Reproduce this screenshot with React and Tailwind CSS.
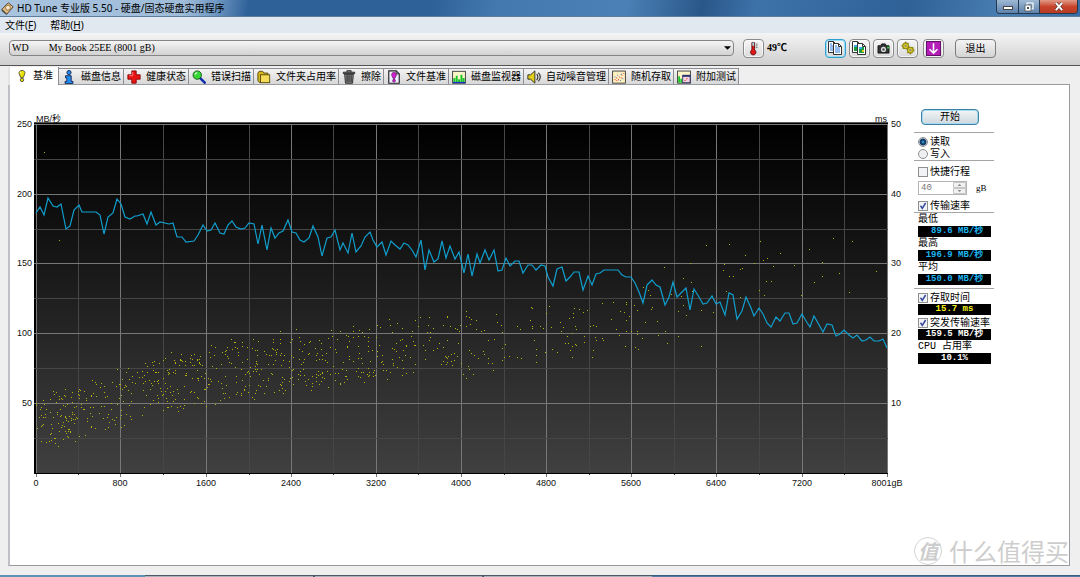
import React, { useState } from 'react';
import clsx from 'clsx';

const SPEED =
    '36,213 40,207 44,215 48,198 53,206 57,207 61,204 66,229 70,226 74,210 79,205 82,212 96,212 100,215 104,234 108,217 113,213 117,199 121,204 125,217 130,219 135,216 137,216 143,214 147,224 151,212 156,225 160,222 169,224 173,223 177,237 182,237 186,242 194,241 198,235 203,225 207,231 211,230 215,223 220,233 224,234 228,225 232,221 236,227 241,229 245,228 249,223 254,224 258,244 262,225 267,250 271,228 275,238 279,233 283,231 288,220 292,232 296,233 300,240 304,242 309,238 313,226 318,237 322,256 327,238 331,237 335,230 340,250 343,243 348,253 352,233 356,252 361,246 365,237 370,232 373,240 377,247 382,242 386,255 391,241 395,245 400,249 404,243 408,245 412,250 416,257 421,240 425,270 429,250 434,262 438,259 442,241 446,258 450,246 455,259 459,252 464,273 468,254 472,276 477,254 480,263 485,250 489,260 494,250 498,271 502,270 506,258 510,266 515,261 519,261 523,273 528,265 532,265 536,270 541,265 545,266 548,277 553,286 557,269 562,267 566,281 570,277 574,272 579,272 583,290 588,276 592,285 596,274 600,273 604,270 618,270 622,275 626,277 631,277 635,283 639,292 643,303 647,285 652,280 656,285 660,287 665,305 669,297 673,282 677,297 682,292 686,288 690,310 694,289 699,297 703,304 707,303 712,296 716,304 720,302 725,315 729,293 733,295 737,319 742,311 746,297 751,308 754,316 759,308 763,314 767,323 771,327 776,317 780,321 785,313 789,313 793,324 797,323 802,314 806,321 810,327 814,316 823,332 827,324 832,325 836,336 840,334 844,330 849,335 853,338 857,335 862,341 866,340 870,337 874,341 879,341 883,339 887,348';

const ACCESS =
    '44,152 59,240 466,311 466,316 469,317 471,319 466,326 470,324 476,320 476,329 481,331 484,330 496,314 497,322 501,325 502,332 517,326 520,329 488,340 494,339 469,350 471,353 474,355 483,351 484,354 478,358 488,358 488,363 492,363 502,360 502,348 505,344 504,357 509,356 517,357 521,358 468,366 469,369 473,374 463,374 466,378 493,370 531,307 532,308 530,320 532,326 532,328 540,326 543,328 549,306 546,313 536,349 536,355 536,362 534,340 545,352 552,349 557,352 551,327 560,322 563,327 561,331 574,308 579,309 587,310 583,312 573,313 573,317 569,318 575,326 576,329 572,333 567,336 584,336 565,343 568,343 575,344 576,345 572,346 570,350 572,357 584,342 593,325 590,326 596,326 595,337 596,340 593,350 592,357 602,303 613,302 602,338 603,340 611,319 616,329 619,335 620,311 624,312 629,316 626,320 626,331 626,302 626,304 634,305 637,310 631,331 637,331 637,334 642,338 625,346 635,347 638,349 645,322 652,307 651,309 657,321 658,335 665,331 667,343 678,311 678,336 683,305 686,315 701,310 701,346 713,312 706,245 729,244 760,241 833,238 852,241 745,255 767,258 763,260 780,253 809,249 690,263 664,267 724,264 723,270 754,263 740,269 742,268 773,266 794,265 822,262 729,276 733,276 766,281 771,281 814,282 822,276 839,273 876,271 683,278 691,282 672,284 671,294 681,296 692,291 643,287 648,290 650,295 726,291 740,297 759,290 764,295 801,295 849,292';

// dense part of the access times: [x from, x to, top at from, top at to, bottom at from, bottom at to, count]
const BANDS = [
    [36, 80, 392, 384, 454, 440, 95],
    [80, 164, 374, 350, 440, 418, 120],
    [164, 206, 350, 346, 416, 410, 82],
    [206, 300, 342, 328, 410, 396, 155],
    [300, 376, 332, 318, 396, 384, 112],
    [376, 461, 318, 308, 384, 370, 92],
];

const accessPath = () => {
    let seed = 77;
    const rnd = () => {
        seed = (seed * 16807) % 2147483647;
        return seed / 2147483647;
    };
    const dots = ACCESS.split(' ').map((p) => `M${p.replace(',', ' ')}h1`);
    BANDS.forEach(([x0, x1, t0, t1, b0, b1, count]) => {
        for (let i = 0; i < count; i++) {
            const k = rnd();
            const top = t0 + (t1 - t0) * k;
            const bottom = b0 + (b1 - b0) * k;
            const y = top + (bottom - top) * (0.15 * rnd() + 0.85 * rnd());
            dots.push(`M${Math.round(x0 + (x1 - x0) * k)} ${Math.round(y)}h1`);
        }
    });
    return dots.join('');
};

const DOTS = accessPath();
const COLS = [36, 78, 120, 163, 206, 249, 291, 333, 376, 418, 461, 504, 546, 589, 631, 674, 716, 759, 802, 844, 887];
const ROWS = [124, 159, 194, 229, 263, 298, 333, 368, 403, 438];

const Chart = () => (
    <svg viewBox="17 112 888 378" className="block w-full h-auto font-['Liberation_Sans','Noto_Sans_CJK_SC',sans-serif] text-[9px]" fill="#111">
        <defs>
            <linearGradient id="plot" x1="0" y1="0" x2="0" y2="1">
                <stop offset="0" stopColor="#000" />
                <stop offset="0.35" stopColor="#141414" />
                <stop offset="0.65" stopColor="#292929" />
                <stop offset="1" stopColor="#404040" />
            </linearGradient>
        </defs>
        <rect x="34" y="122" width="854" height="352" fill="#000" />
        <rect x="36" y="124" width="851" height="349" fill="url(#plot)" />
        <g shapeRendering="crispEdges">
            {COLS.map((x, i) => (
                <rect key={x} x={x} y="124" width="1" height={i % 2 ? 351 : 353} fill={i % 2 ? '#464646' : '#777'} />
            ))}
            {ROWS.map((y, i) => (
                <rect key={y} x="34" y={y} width="854" height="1" fill={i % 2 ? '#464646' : '#777'} />
            ))}
            <rect x="34" y="122" width="854" height="1" fill="#555" />
            <rect x="34" y="473" width="854" height="1" fill="#000" />
            <path d={DOTS} transform="translate(0 0.5)" stroke="#b4b40a" fill="none" />
        </g>
        <polyline points={SPEED} fill="none" stroke="#109fce" strokeWidth="1.2" />
        <g>
            <text x="36" y="122">MB/秒</text>
            <text x="887" y="122" textAnchor="end">ms</text>
            {[250, 200, 150, 100, 50].map((v, i) => (
                <text key={v} x="32" y={ROWS[i * 2] + 3} textAnchor="end">{v}</text>
            ))}
            {[50, 40, 30, 20, 10].map((v, i) => (
                <text key={v} x="891" y={ROWS[i * 2] + 3}>{v}</text>
            ))}
            {[0, 800, 1600, 2400, 3200, 4000, 4800, 5600, 6400, 7200, '8001gB'].map((v, i) => (
                <text key={v} x={COLS[i * 2]} y="486" textAnchor="middle">{v}</text>
            ))}
        </g>
    </svg>
);

const Icon = ({ children, className = 'size-3' }) => (
    <svg viewBox="0 0 16 16" className={clsx('shrink-0', className)} aria-hidden="true">{children}</svg>
);

const Bang = () => (
    <Icon className="w-3 h-[14px]">
        <path d="M8 0.6C4.6 0.6 3.6 2.8 4.2 5L6.4 10.2H9.6L11.8 5C12.4 2.8 11.4 0.6 8 0.6Z" fill="#e8e000" stroke="#333" />
        <circle cx="8" cy="13.2" r="2.3" fill="#e8e000" stroke="#333" />
        <path d="M6.6 2.6V5" stroke="#fff" />
    </Icon>
);
const Info = () => (
    <Icon className="size-[14px]">
        <circle cx="8" cy="2.9" r="2.4" fill="#1f8cf0" stroke="#102050" />
        <path d="M4 6.5H10.5V13H12.5V15.5H3.5V13H5.5V9H4Z" fill="#1f8cf0" stroke="#102050" />
    </Icon>
);
const Cross = () => (
    <Icon className="size-[14px]">
        <path d="M5.5 1H10.5V5.5H15V10.5H10.5V15H5.5V10.5H1V5.5H5.5Z" fill="#e81414" stroke="#800" />
        <path d="M6.5 2.5V6.5H2.5" stroke="#ff8a8a" fill="none" />
    </Icon>
);
const Scan = () => (
    <Icon className="size-[14px]">
        <path d="M8.5 8.5L14.5 14.5" stroke="#1030b0" strokeWidth="3" strokeLinecap="round" />
        <circle cx="6" cy="5.8" r="4.8" fill="#35d835" stroke="#164e16" />
        <path d="M3.5 5.5C3.6 4 4.5 3.2 6 3.2" stroke="#d8ffd8" strokeWidth="1.4" fill="none" />
    </Icon>
);
const Folder = () => (
    <Icon className="size-[14px]">
        <path d="M1 3.5L2.5 1.5H6.5L8 3.5H12.5V14H2.5L1 12Z" fill="#d6b51c" stroke="#54430a" />
        <rect x="4" y="5.5" width="10.5" height="9" fill="#f4dc58" stroke="#54430a" />
    </Icon>
);
const Trash = () => (
    <Icon className="size-[14px]">
        <path d="M5.5 2V0.8H10.5V2M1.5 2.5H14.5V4.2H1.5Z" fill="#777" stroke="#222" />
        <path d="M3 5H13L12 15.2H4Z" fill="#8b8b8b" stroke="#222" />
        <path d="M5.8 6V14M8 6V14M10.4 6V14" stroke="#222" strokeWidth="1.1" />
    </Icon>
);
const FileBench = () => (
    <Icon className="size-[14px]">
        <path d="M2 1H10.5L14 4.5V15.2H2Z" fill="#eef" stroke="#222" strokeWidth="1.3" />
        <path d="M10.5 1V4.5H14" fill="none" stroke="#222" />
        <path d="M8 2.8C5.8 2.8 5 4.4 5.4 6L7 9.6H9L10.6 6C11 4.4 10.2 2.8 8 2.8Z" fill="#d420d4" stroke="#4b0a4b" strokeWidth="0.7" />
        <circle cx="8" cy="12.2" r="1.6" fill="#d420d4" stroke="#4b0a4b" strokeWidth="0.7" />
    </Icon>
);
const Monitor = () => (
    <Icon className="size-[14px]">
        <rect x="0.7" y="1.5" width="14.6" height="13.6" fill="#fdf6c8" stroke="#333" />
        <path d="M2.7 14.5V9M5.4 14.5V6.5M8.1 14.5V10.5M10.8 14.5V5.5M13.3 14.5V9" stroke="#14c428" strokeWidth="2.2" />
        <path d="M1.2 14.3H15" stroke="#1530d0" strokeWidth="1.4" />
    </Icon>
);
const Speaker = () => (
    <Icon className="size-[14px]">
        <path d="M1 5.5H4L9 1V15L4 10.5H1Z" fill="#e3cf1a" stroke="#222" />
        <path d="M11 4.5C12.6 6.5 12.6 9.5 11 11.5M13 3C15.6 6 15.6 10 13 13" stroke="#333" strokeWidth="1.3" fill="none" />
    </Icon>
);
const Random = () => (
    <Icon className="size-[14px]">
        <rect x="0.7" y="1.2" width="14.6" height="13.8" fill="#fdf1c0" stroke="#333" />
        <path d="M3 11h1M5 9h1M7 11h1M8 8h1M10 9h1M11 6h1M13 4h1M5 12h1" stroke="#e03838" strokeWidth="1.3" />
        <path d="M3 8h1M6 6h1M9 12h1M12 10h1M10 5h1" stroke="#4060e0" strokeWidth="1.3" />
    </Icon>
);
const Extra = () => (
    <Icon className="size-[14px]">
        <rect x="0.7" y="1.2" width="14.6" height="13.8" fill="#fdf6c8" stroke="#333" />
        <path d="M2.4 14.5V7M4.8 14.5V10" stroke="#14c428" strokeWidth="2" />
        <rect x="6.5" y="6" width="8.5" height="8.5" fill="#f7d4dc" stroke="#24306e" />
        <path d="M6.5 6.8H15" stroke="#24306e" strokeWidth="2" />
        <path d="M8.5 12H10M10.5 10H12" stroke="#e03838" />
    </Icon>
);

const TABS = [
    ['基准', Bang],
    ['磁盘信息', Info],
    ['健康状态', Cross],
    ['错误扫描', Scan],
    ['文件夹占用率', Folder],
    ['擦除', Trash],
    ['文件基准', FileBench],
    ['磁盘监视器', Monitor],
    ['自动噪音管理', Speaker],
    ['随机存取', Random],
    ['附加测试', Extra],
];

const Page = ({ x, y, children }) => (
    <g transform={`translate(${x} ${y})`}>
        <path d="M0.5 0.5H5.5L8.5 3.5V11.5H0.5Z" fill="#fff" stroke="#333" />
        <path d="M5.5 0.5V3.5H8.5" fill="none" stroke="#333" />
        {children}
    </g>
);
const Lines = () => <path d="M2 3H4M2 5H7M2 7H7M2 9H7" stroke="#2a78d8" />;
const Pic = () => (
    <g>
        <rect x="2" y="4" width="5" height="6" fill="#1c9c3c" />
        <rect x="2" y="4" width="3" height="2" fill="#36a8e8" />
        <rect x="5" y="7" width="2" height="2" fill="#e8c820" />
    </g>
);

const ToolButton = ({ label, active, className, children }) => (
    <button
        aria-label={label}
        title={label}
        className={clsx(
            'flex items-center justify-center w-[21px] h-[19px] shrink-0 rounded-sm border bg-gradient-to-b from-[#f6f6f6] to-[#dadada]',
            active ? 'border-[#2f9fd0] ring-1 ring-inset ring-[#9adcf5]' : 'border-[#8a8a8a] ring-1 ring-inset ring-white/70',
            className
        )}
    >
        {children}
    </button>
);

const Toolbar = () => (
    <div className="flex items-center h-[33px] pl-[9px] pr-[84px] pt-1 pb-[6px] border-b border-[#555] bg-gradient-to-b from-[#f4f4f4] to-[#cfcfcf]">
        <div className="relative flex-1 min-w-0">
            <select
                aria-label="WD My Book"
                className="block w-full h-4 appearance-none rounded-sm border border-[#858585] bg-gradient-to-b from-[#f5f5f5] to-[#d2d2d2] pl-[2px] font-['Liberation_Serif',serif] text-[10px] leading-[14px] text-black"
            >
                <option>{'WD\u00a0\u00a0\u00a0\u00a0\u00a0\u00a0\u00a0\u00a0My Book 25EE (8001 gB)'}</option>
            </select>
            <svg viewBox="0 0 8 4" className="absolute right-[3px] top-[6px] w-[7px] h-1 pointer-events-none">
                <path d="M0 0H8L4 4Z" />
            </svg>
        </div>
        <ToolButton label="温度" className="ml-[9px]">
            <svg viewBox="0 0 10 16" className="w-[9px] h-[15px]">
                <path d="M3.2 1.5H6.2V9.5A3 3 0 1 1 3.2 9.5Z" fill="#e01818" stroke="#5a1010" />
                <path d="M3.7 1.5H5.7V5H3.7Z" fill="#9fdce8" />
                <path d="M7.5 3H9.5M7.5 5H9.5M7.5 7H9.5" stroke="#444" strokeWidth="0.8" />
            </svg>
        </ToolButton>
        <span className="w-[61px] pl-[3px] font-bold text-[10px] leading-3 font-['Liberation_Serif','Noto_Sans_CJK_SC',serif]">49℃</span>
        <div className="flex gap-[3px]">
            <ToolButton label="复制信息" active>
                <svg viewBox="0 0 15 14" className="w-[15px] h-[14px]">
                    <Page x={0} y={0}><Lines /></Page>
                    <Page x={5} y={2}><Lines /></Page>
                </svg>
            </ToolButton>
            <ToolButton label="复制截图">
                <svg viewBox="0 0 15 14" className="w-[15px] h-[14px]">
                    <Page x={0} y={0}><Pic /></Page>
                    <Page x={5} y={2}><Pic /></Page>
                </svg>
            </ToolButton>
            <ToolButton label="保存截图">
                <svg viewBox="0 0 14 12" className="w-[13px] h-[11px]">
                    <path d="M1 3H4L5 1H9L10 3H13V11H1Z" fill="#333" stroke="#111" />
                    <circle cx="7" cy="7" r="2.8" fill="#ddd" />
                    <circle cx="7" cy="7" r="1.4" fill="#555" />
                    <rect x="11" y="4" width="2" height="2" fill="#30d030" />
                </svg>
            </ToolButton>
            <ToolButton label="选项">
                <svg viewBox="0 0 14 14" className="w-[14px] h-[14px]">
                    <path d="M4.8 4.8L9.4 9.2" stroke="#8a8010" strokeWidth="4" />
                    <circle cx="4.6" cy="4.8" r="3" fill="#d8cc20" stroke="#8a8010" />
                    <circle cx="9.4" cy="9.2" r="3" fill="#d8cc20" stroke="#8a8010" />
                    <path d="M4.6 0.8V2.4M0.6 4.8H2.2M1.8 7.6L2.8 6.6M9.4 11.6V13.2M11.8 9.2H13.4M12.2 6.4L11.2 7.4M6.4 12L7.4 11M7.4 2L6.4 3" stroke="#8a8010" strokeWidth="1.5" />
                    <circle cx="4.6" cy="4.8" r="1.1" fill="#888" />
                    <circle cx="9.4" cy="9.2" r="1.1" fill="#888" />
                </svg>
            </ToolButton>
        </div>
        <ToolButton label="最小化到托盘" className="ml-[5px]">
            <svg viewBox="0 0 16 16" className="w-[15px] h-[15px]">
                <rect x="0.5" y="0.5" width="15" height="15" fill="#b41cb8" stroke="#5c0c60" />
                <path d="M8 2.5V13M3.8 8.8L8 13L12.2 8.8" fill="none" stroke="#fff" strokeWidth="1.7" />
            </svg>
        </ToolButton>
        <button className="ml-[11px] w-[41px] h-[19px] rounded-sm border border-[#7d7d7d] bg-gradient-to-b from-[#f4f4f4] to-[#d4d4d4] text-[10px] leading-[17px]">
            退出
        </button>
    </div>
);

const Rule = () => <div className="h-px bg-[#a5a5a5]" />;

const Value = ({ color, children }) => (
    <output className={clsx("block ml-1 w-[73px] h-[11px] bg-black text-center font-bold text-[9px] leading-[11px] whitespace-nowrap overflow-hidden font-['Liberation_Mono','Noto_Sans_CJK_SC',monospace]", color)}>
        {children}
    </output>
);

const Caption = ({ children }) => (
    <div className="pl-1 h-[13px] leading-[13px] whitespace-nowrap font-['Liberation_Mono','Noto_Sans_CJK_SC',monospace]">{children}</div>
);

const Check = ({ checked, children }) => (
    <label className="flex items-center gap-[2px] pl-1 h-3 leading-3 whitespace-nowrap">
        <input
            type="checkbox"
            defaultChecked={checked}
            className="peer appearance-none size-[10px] shrink-0 border border-[#8e8f8f] bg-[#f1f3f6]"
        />
        <svg viewBox="0 0 10 10" className="hidden peer-checked:block -ml-3 size-[10px] shrink-0 pointer-events-none">
            <path d="M2.5 4.8L4.3 7.4L7.6 2" fill="none" stroke="#35499c" strokeWidth="1.5" />
        </svg>
        {children}
    </label>
);

const Radio = ({ value, mode, setMode, children }) => (
    <label className="flex items-center gap-[2px] pl-1 h-3 leading-3">
        <input
            type="radio"
            name="mode"
            checked={mode === value}
            onChange={() => setMode(value)}
            className="appearance-none size-[10px] shrink-0 rounded-full border border-[#8e8f8f] bg-[#eef0f2] checked:bg-[radial-gradient(circle,#39b3e6_0,#123a66_2px,#123a66_3px,#eef0f2_4px)]"
        />
        {children}
    </label>
);

const Sidebar = () => {
    const [mode, setMode] = useState('read');
    return (
        <aside className="w-20 shrink-0 pt-6 text-[10px] text-black">
            <button className="block ml-[7px] w-[58px] h-4 rounded-sm border border-[#3c7fa5] ring-1 ring-inset ring-[#a5dcf0] bg-gradient-to-b from-[#f2f5f7] to-[#cfd8de] leading-[14px]">
                开始
            </button>
            <div className="mt-[7px]"><Rule /></div>
            <div className="pt-[3px]">
                <Radio value="read" mode={mode} setMode={setMode}>读取</Radio>
                <Radio value="write" mode={mode} setMode={setMode}>写入</Radio>
            </div>
            <Rule />
            <div className="pt-[5px]">
                <Check>快捷行程</Check>
                <div className="flex items-center pl-1 mt-[3px] mb-[5px]">
                    <div className="relative w-[49px] h-[14px]">
                        <input
                            aria-label="快捷行程 gB"
                            disabled
                            defaultValue="40"
                            className="block w-full h-full border border-[#b4b4b4] bg-white pl-[2px] text-[9px] leading-3 text-[#777] font-['Liberation_Mono',monospace]"
                        />
                        <svg viewBox="0 0 13 12" className="absolute right-px top-px w-[13px] h-3">
                            <path d="M0.5 0.5H12.5V5.5H0.5ZM0.5 6.5H12.5V11.5H0.5Z" fill="#f2f2f2" stroke="#c6c6c6" />
                            <path d="M6.5 2L8.5 4H4.5ZM6.5 10L8.5 8H4.5Z" fill="#888" />
                        </svg>
                    </div>
                    <span className="ml-[9px] text-[9px] leading-3 font-['Liberation_Serif',serif]">gB</span>
                </div>
                <Check checked>传输速率</Check>
            </div>
            <Rule />
            <Caption>最低</Caption>
            <Value color="text-[#1cb4f0]">&nbsp;89.6 MB/秒</Value>
            <Caption>最高</Caption>
            <Value color="text-[#1cb4f0]">196.9 MB/秒</Value>
            <Caption>平均</Caption>
            <Value color="text-[#1cb4f0]">150.0 MB/秒</Value>
            <div className="my-[3px]"><Rule /></div>
            <Check checked>存取时间</Check>
            <Value color="text-[#f4f41c]">15.7 ms</Value>
            <div className="mt-[2px]"><Check checked>突发传输速率</Check></div>
            <Value color="text-white">159.5 MB/秒</Value>
            <Caption>CPU 占用率</Caption>
            <Value color="text-white">10.1%</Value>
        </aside>
    );
};

const TitleBar = () => (
    <header className="relative flex items-center h-[17px] pl-[1px] pr-[2px] border-b border-[#5d7c9e] bg-[linear-gradient(100deg,#a9c4df_0%,#9fbcd9_17%,#6f98c2_20%,#2f6199_23%,#2f6199_40%,#4379ae_46%,#4a80b5_58%,#2a578a_65%,#3d72a9_70%,#2f6197_84%,#4a7fb3_93%,#3a6da3_100%)]">
        <Icon className="size-[13px]">
            <path d="M1 9L9 1L15 6L7 15Z" fill="#e2b87c" stroke="#3a2c1c" />
            <path d="M1 9L7 15V16L1 11Z" fill="#333" />
            <circle cx="8.5" cy="7" r="3" fill="#f6e6c8" stroke="#8c6a3a" />
        </Icon>
        <h1 className="ml-[3px] text-[10px] leading-4 whitespace-nowrap text-black font-['Noto_Sans','Noto_Sans_CJK_SC',sans-serif]">
            HD Tune 专业版 5.50 - 硬盘/固态硬盘实用程序
        </h1>
        <div className="ml-auto flex self-start h-[14px] rounded-b border border-t-0 border-[#26384e] overflow-hidden">
            <button aria-label="最小化" className="flex items-center justify-center w-[22px] bg-gradient-to-b from-[#9fb9d4] to-[#5d82ab] border-r border-[#26384e]">
                <svg viewBox="0 0 10 4" className="w-[10px] h-1 mt-[2px]"><rect x="0.5" y="0.5" width="9" height="3" fill="#fff" stroke="#444" /></svg>
            </button>
            <button aria-label="还原" className="flex items-center justify-center w-[21px] bg-gradient-to-b from-[#9fb9d4] to-[#5d82ab] border-r border-[#26384e]">
                <svg viewBox="0 0 10 10" className="size-[10px]">
                    <path d="M3 1H9V7H3Z" fill="none" stroke="#fff" strokeWidth="1.2" />
                    <path d="M1 3H7V9H1Z" fill="#fff" stroke="#444" strokeWidth="0.7" />
                    <rect x="3" y="5" width="2" height="2" fill="#456" />
                </svg>
            </button>
            <button aria-label="关闭" className="flex items-center justify-center w-[37px] bg-gradient-to-b from-[#e09a88] via-[#c8452c] to-[#b83a20]">
                <svg viewBox="0 0 10 10" className="w-[10px] h-[9px]">
                    <path d="M1.5 1L8.5 9M8.5 1L1.5 9" stroke="#533" strokeWidth="3.6" />
                    <path d="M1.5 1L8.5 9M8.5 1L1.5 9" stroke="#fff" strokeWidth="2.2" />
                </svg>
            </button>
        </div>
    </header>
);

const App = () => {
    const [tab, setTab] = useState(0);
    return (
        <div className="min-h-screen flex flex-col bg-[#efefef] text-black font-['Liberation_Sans','Noto_Sans_CJK_SC',sans-serif]">
            <TitleBar />
            <nav className="flex items-center gap-[14px] h-4 pl-[5px] bg-[#e1e8f0] text-[10px] leading-4 font-['Noto_Sans','Noto_Sans_CJK_SC',sans-serif]">
                <button>文件(<u>F</u>)</button>
                <button>帮助(<u>H</u>)</button>
            </nav>
            <Toolbar />

            <main className="flex-1 flex flex-col pl-2 pr-[10px] pb-[9px]">
                <div role="tablist" className="flex items-end h-[18px]">
                    {TABS.map(([name, TabIcon], i) => (
                        <button
                            key={name}
                            role="tab"
                            aria-selected={tab === i}
                            onClick={() => setTab(i)}
                            className={clsx(
                                'flex items-center shrink-0 text-[10px] leading-4 whitespace-nowrap border-r border-[#8c8e94]',
                                tab === i
                                    ? 'relative z-10 h-[18px] -mb-px pl-[6px] pr-[5px] gap-[5px] bg-white border-l-2 border-l-[#e4e4e4]'
                                    : 'h-4 pl-[3px] pr-[2px] gap-[5px] border-t bg-gradient-to-b from-[#f3f3f3] to-[#d8d8d8]'
                            )}
                        >
                            <TabIcon />
                            {name}
                        </button>
                    ))}
                </div>

                <section className="relative flex-1 flex items-start gap-[9px] pl-[7px] pr-[75px] bg-white border border-[#9a9ba1] border-l-2 border-l-[#c0c1c6]">
                    <div className="flex-1 min-w-0 pt-[27px]">
                        <Chart />
                    </div>
                    <Sidebar />

                    {/* Watermark */}
                    <div className="absolute right-0 bottom-0 flex items-center gap-[7px] text-[#cdcdcd] text-2xl leading-7 whitespace-nowrap font-['Noto_Sans_CJK_SC',sans-serif]">
                        <span className="flex items-center justify-center size-7 rounded-full border border-[#d4d4d4] text-xl font-bold italic">值</span>
                        <span>什么值得买</span>
                    </div>
                </section>
            </main>

            <footer className="flex h-[2px]">
                <div className="w-[145px] bg-[#5b93b5]" />
                <div className="flex-1 bg-[#a9b2bb] border-t border-[#4c5a68]" />
                <div className="flex-1 bg-[#a9b2bb] border-t border-l-2 border-[#4c5a68]" />
                <div className="flex-1 bg-[#a9b2bb] border-t border-l-2 border-[#4c5a68]" />
                <div className="w-[428px] bg-[#4f7ba6] border-t border-[#3c5f85]" />
            </footer>
        </div>
    );
};

export default App;
